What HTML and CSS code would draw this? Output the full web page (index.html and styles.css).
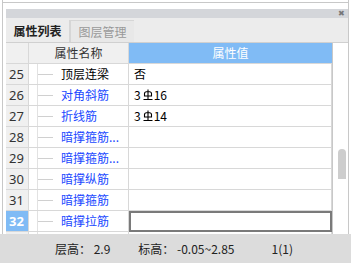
FILE: index.html
```html
<!DOCTYPE html>
<html lang="zh-CN">
<head>
  <meta charset="UTF-8">
  <title>属性列表</title>
  <link rel="stylesheet" href="styles.css">
</head>
<body>
  <div class="app">
    <div class="prev-panel"></div>
    <div class="frame">
      <div class="panel">
        <div class="titlebar"><span class="close">&#x2716;</span></div>
        <div class="tabs">
          <div class="tab active">属性列表</div>
          <div class="tab">图层管理</div>
        </div>
        <div class="grid-wrap">
          <div class="grid">
            <div class="row head">
              <div class="num"></div>
              <div class="name">属性名称</div>
              <div class="val">属性值</div>
            </div>
            <div class="row">
              <div class="num">25</div>
              <div class="name"><span class="tree"></span><span>顶层连梁</span></div>
              <div class="val">否</div>
            </div>
            <div class="row">
              <div class="num">26</div>
              <div class="name blue"><span class="tree"></span><span>对角斜筋</span></div>
              <div class="val">3<svg class="steel" width="10" height="12" viewBox="0 0 10 12"><path d="M1.5 7V4.5Q1.5 2.5 5 2.5T8.5 4.5V7ZM5 0.5V10.5M0.5 10.5H9.5" fill="none" stroke="#000" stroke-width="1.1"/></svg>16</div>
            </div>
            <div class="row">
              <div class="num">27</div>
              <div class="name blue"><span class="tree"></span><span>折线筋</span></div>
              <div class="val">3<svg class="steel" width="10" height="12" viewBox="0 0 10 12"><path d="M1.5 7V4.5Q1.5 2.5 5 2.5T8.5 4.5V7ZM5 0.5V10.5M0.5 10.5H9.5" fill="none" stroke="#000" stroke-width="1.1"/></svg>14</div>
            </div>
            <div class="row">
              <div class="num">28</div>
              <div class="name blue"><span class="tree"></span><span>暗撑箍筋...</span></div>
              <div class="val"></div>
            </div>
            <div class="row">
              <div class="num">29</div>
              <div class="name blue"><span class="tree"></span><span>暗撑箍筋...</span></div>
              <div class="val"></div>
            </div>
            <div class="row">
              <div class="num">30</div>
              <div class="name blue"><span class="tree"></span><span>暗撑纵筋</span></div>
              <div class="val"></div>
            </div>
            <div class="row">
              <div class="num">31</div>
              <div class="name blue"><span class="tree"></span><span>暗撑箍筋</span></div>
              <div class="val"></div>
            </div>
            <div class="row selected">
              <div class="num">32</div>
              <div class="name blue"><span class="tree"></span><span>暗撑拉筋</span></div>
              <div class="val"></div>
            </div>
            <div class="row">
              <div class="num"></div>
              <div class="name"><span class="tree"></span></div>
              <div class="val"></div>
            </div>
          </div>
          <div class="scrollbar"><div class="thumb"></div></div>
        </div>
      </div>
    </div>
    <div class="status">
      <span class="floor">层高： 2.9</span>
      <span class="elev">标高： -0.05~2.85</span>
      <span class="count">1(1)</span>
    </div>
  </div>
</body>
</html>
```

FILE: styles.css
```css
body {
  margin: 0;
  background: #fff;
  font-family: "Noto Sans CJK SC", "Noto Sans", sans-serif;
  font-size: 12px;
  color: #000;
}
.app {
  width: 351px;
  height: 263px;
  display: flex;
  flex-direction: column;
  overflow: hidden;
}
.prev-panel {
  height: 2px;
  margin: 0 2px 0 2px;
  border: 1px solid #c8c8c8;
  border-top: none;
  flex-shrink: 0;
}
.frame {
  flex: 1;
  margin-left: 2px;
  margin-right: 2px;
  border-left: 1px solid #c8c8c8;
  border-right: 1px solid #c8c8c8;
  padding: 6px 0 0 3px;
  overflow: hidden;
}
.panel {
  height: 100%;
  display: flex;
  flex-direction: column;
}
.titlebar {
  height: 9px;
  background: #d4d6da;
  position: relative;
  flex-shrink: 0;
}
.close {
  position: absolute;
  right: 3px;
  top: -2px;
  font-size: 8px;
  line-height: 12px;
  color: #777;
}
.tabs {
  height: 24px;
  background: #ececec;
  border-bottom: 1px solid #d0d0d0;
  display: flex;
  align-items: flex-end;
  flex-shrink: 0;
}
.tab {
  width: 64px;
  height: 22px;
  line-height: 22px;
  text-align: center;
  color: #999;
  background: #e8e8e8;
  border-left: 1px solid #d6d6d6;
  border-top: 1px solid #d6d6d6;
  box-sizing: border-box;
}
.tab.active {
  color: #222;
  background: #ececec;
  border: none;
  border-right: 1px solid #d6d6d6;
  font-weight: bold;
  width: 64px;
}
.grid-wrap {
  flex: 1;
  display: flex;
  overflow: hidden;
}
.grid {
  width: 327px;
  border-right: 1px solid #c8c8c8;
}
.row {
  display: flex;
  height: 21px;
  border-bottom: 1px solid #d8d8d8;
  box-sizing: border-box;
}
.row > div {
  box-sizing: border-box;
  border-right: 1px solid #d8d8d8;
  line-height: 20px;
}
.num {
  width: 23px;
  background: #f0f0f0;
  font-size: 13px;
  color: #333;
  padding-left: 3px;
  font-family: "Noto Sans", sans-serif;
}
.name {
  width: 100px;
  display: flex;
  align-items: center;
}
.val {
  flex: 1;
  padding-left: 5px;
  display: flex;
  align-items: center;
}
.head > div {
  background: #f0f0f0;
}
.head .name {
  justify-content: center;
  color: #333;
}
.head .val {
  background: #80bbf5;
  color: #fff;
  justify-content: center;
  border-right: none;
  padding-left: 0;
}
.tree {
  width: 8px;
  height: 100%;
  border-right: 1px solid #e2e2e2;
  position: relative;
}
.tree::after {
  content: "";
  position: absolute;
  left: 9px;
  top: 10px;
  width: 15px;
  border-top: 1px solid #d0d0d0;
}
.tree + span {
  margin-left: 23px;
}
.blue {
  color: #2048ff;
}
.steel {
  margin: 0 1px 0 2px;
}
.selected .num {
  background: #80bbf5;
  color: #fff;
  font-weight: bold;
}
.selected .val {
  border: 2px solid #7a7a7a;
  margin-bottom: -1px;
}
.scrollbar {
  width: 15px;
  position: relative;
}
.thumb {
  position: absolute;
  left: 5px;
  top: 106px;
  width: 8px;
  height: 30px;
  background: #cdcdcd;
  border-radius: 4px 4px 0 0;
}
.status {
  height: 29px;
  background: #dcdcdc;
  display: flex;
  align-items: center;
  color: #222;
  flex-shrink: 0;
}
.floor {
  margin-left: 55px;
}
.elev {
  margin-left: 28px;
}
.count {
  margin-left: 37px;
}
```
